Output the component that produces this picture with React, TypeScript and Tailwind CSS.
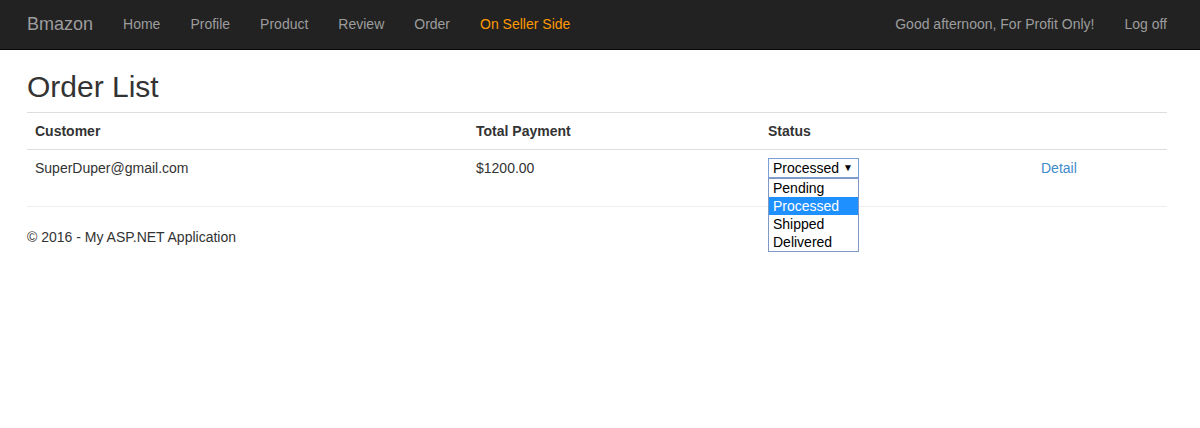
const navLinks = ["Home", "Profile", "Product", "Review", "Order"];

const statusOptions = ["Pending", "Processed", "Shipped", "Delivered"];

const StatusSelect = () => {
  const selected = "Processed";
  return (
    <div className="relative w-[91px]">
      <div className="flex h-[20px] items-center justify-between border border-[#7b9ed6] bg-white pl-[4px] pr-[5px] text-[14px] leading-[18px] text-black">
        <span>{selected}</span>
        <span className="text-[10px]">▼</span>
      </div>
      <div className="absolute left-0 top-[20px] z-10 w-[91px] border border-[#7f98c4] bg-white">
        {statusOptions.map((opt) => (
          <div
            key={opt}
            className={
              opt === selected
                ? "h-[18px] bg-[#1e90ff] pl-[4px] text-[14px] leading-[18px] text-white"
                : "h-[18px] pl-[4px] text-[14px] leading-[18px] text-black"
            }
          >
            {opt}
          </div>
        ))}
      </div>
    </div>
  );
};

export default function App() {
  return (
    <div className="min-h-[428px] bg-white font-['Liberation_Sans',Arial,sans-serif] text-[14px] text-[#333]">
      <nav className="h-[50px] border-b border-[#080808] bg-[#222]">
        <div className="ml-[12px] flex h-full w-[1170px] items-center">
          <span className="px-[15px] text-[18px] text-[#9d9d9d]">Bmazon</span>
          {navLinks.map((link) => (
            <a key={link} className="px-[15px] text-[#9d9d9d]">
              {link}
            </a>
          ))}
          <a className="px-[15px] text-[#ff9900]">On Seller Side</a>
          <div className="ml-auto flex items-center">
            <a className="px-[15px] text-[#9d9d9d]">Good afternoon, For Profit Only!</a>
            <a className="px-[15px] text-[#9d9d9d]">Log off</a>
          </div>
        </div>
      </nav>

      <div className="ml-[27px] w-[1140px]">
        <h2 className="mt-[20px] mb-[9px] text-[30px] leading-[33px] font-normal">Order List</h2>

        <div className="grid grid-cols-[441px_292px_273px_134px]">
          <div className="border-t border-[#ddd] p-[8px] leading-[20px] font-bold">Customer</div>
          <div className="border-t border-[#ddd] p-[8px] leading-[20px] font-bold">Total Payment</div>
          <div className="border-t border-[#ddd] p-[8px] leading-[20px] font-bold">Status</div>
          <div className="border-t border-[#ddd] p-[8px] leading-[20px]"></div>

          <div className="border-t border-[#ddd] p-[8px] leading-[20px]">SuperDuper@gmail.com</div>
          <div className="border-t border-[#ddd] p-[8px] leading-[20px]">$1200.00</div>
          <div className="border-t border-[#ddd] p-[8px] leading-[20px]">
            <StatusSelect />
          </div>
          <div className="border-t border-[#ddd] p-[8px] leading-[20px]">
            <a className="text-[#428bca]">Detail</a>
          </div>
        </div>

        <hr className="mt-[20px] border-t border-[#eee]" />
        <footer className="mt-[20px] leading-[20px]">© 2016 - My ASP.NET Application</footer>
      </div>
    </div>
  );
}
